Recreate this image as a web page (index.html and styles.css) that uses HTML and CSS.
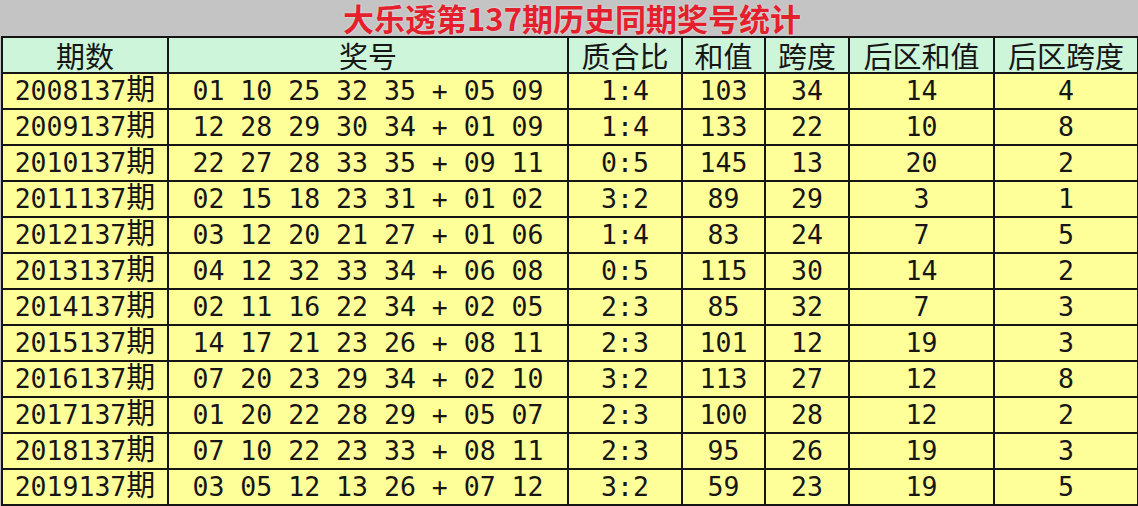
FILE: index.html
```html
<!DOCTYPE html>
<html lang="zh-CN">
<head>
<meta charset="utf-8">
<title>大乐透第137期历史同期奖号统计</title>
<link rel="stylesheet" href="styles.css">
</head>
<body>
<div class="sheet">
  <div class="title">大乐透第137期历史同期奖号统计</div>
  <table class="stats">
    <colgroup>
      <col class="c1"><col class="c2"><col class="c3"><col class="c4"><col class="c5"><col class="c6"><col class="c7">
    </colgroup>
    <thead>
      <tr><th>期数</th><th>奖号</th><th>质合比</th><th>和值</th><th>跨度</th><th>后区和值</th><th>后区跨度</th></tr>
    </thead>
    <tbody>
      <tr><td>2008137<span class="qi">期</span></td><td>01 10 25 32 35 + 05 09</td><td>1:4</td><td>103</td><td>34</td><td>14</td><td>4</td></tr>
      <tr><td>2009137<span class="qi">期</span></td><td>12 28 29 30 34 + 01 09</td><td>1:4</td><td>133</td><td>22</td><td>10</td><td>8</td></tr>
      <tr><td>2010137<span class="qi">期</span></td><td>22 27 28 33 35 + 09 11</td><td>0:5</td><td>145</td><td>13</td><td>20</td><td>2</td></tr>
      <tr><td>2011137<span class="qi">期</span></td><td>02 15 18 23 31 + 01 02</td><td>3:2</td><td>89</td><td>29</td><td>3</td><td>1</td></tr>
      <tr><td>2012137<span class="qi">期</span></td><td>03 12 20 21 27 + 01 06</td><td>1:4</td><td>83</td><td>24</td><td>7</td><td>5</td></tr>
      <tr><td>2013137<span class="qi">期</span></td><td>04 12 32 33 34 + 06 08</td><td>0:5</td><td>115</td><td>30</td><td>14</td><td>2</td></tr>
      <tr><td>2014137<span class="qi">期</span></td><td>02 11 16 22 34 + 02 05</td><td>2:3</td><td>85</td><td>32</td><td>7</td><td>3</td></tr>
      <tr><td>2015137<span class="qi">期</span></td><td>14 17 21 23 26 + 08 11</td><td>2:3</td><td>101</td><td>12</td><td>19</td><td>3</td></tr>
      <tr><td>2016137<span class="qi">期</span></td><td>07 20 23 29 34 + 02 10</td><td>3:2</td><td>113</td><td>27</td><td>12</td><td>8</td></tr>
      <tr><td>2017137<span class="qi">期</span></td><td>01 20 22 28 29 + 05 07</td><td>2:3</td><td>100</td><td>28</td><td>12</td><td>2</td></tr>
      <tr><td>2018137<span class="qi">期</span></td><td>07 10 22 23 33 + 08 11</td><td>2:3</td><td>95</td><td>26</td><td>19</td><td>3</td></tr>
      <tr><td>2019137<span class="qi">期</span></td><td>03 05 12 13 26 + 07 12</td><td>3:2</td><td>59</td><td>23</td><td>19</td><td>5</td></tr>
    </tbody>
  </table>
</div>
</body>
</html>
```

FILE: styles.css
```css
html, body {
  margin: 0;
  padding: 0;
  background: #ffffff;
}

.sheet {
  width: 1138px;
  background: #c4c4c4;
}

.title {
  height: 36px;
  line-height: 36px;
  text-align: center;
  font-family: "Noto Sans CJK SC", sans-serif;
  font-weight: 700;
  font-size: 31px;
  color: #e3202c;
  text-shadow: 0 0 2px rgba(255, 255, 255, 0.7);
  padding-left: 6px;
}

.stats {
  border-collapse: collapse;
  table-layout: fixed;
  width: 1136px;
  margin-left: 1px;
}

.c1 { width: 166px; }
.c2 { width: 400px; }
.c3 { width: 114px; }
.c4 { width: 83px; }
.c5 { width: 84px; }
.c6 { width: 145px; }
.c7 { width: 144px; }

.stats th,
.stats td {
  border: 2px solid #151515;
  padding: 0;
  height: 34px;
  text-align: center;
  white-space: nowrap;
  color: #161616;
}

.stats th {
  background: #cdf5da;
  font-family: "Noto Sans CJK SC", sans-serif;
  font-weight: 400;
  font-size: 29px;
  line-height: 34px;
}

.stats td {
  background: #ffff99;
  font-family: "DejaVu Sans Mono", "Noto Sans CJK SC", monospace;
  font-size: 26.5px;
  line-height: 34px;
}

.stats .qi {
  font-family: "Noto Sans CJK SC", sans-serif;
  font-size: 29px;
  line-height: 26px;
}
```
